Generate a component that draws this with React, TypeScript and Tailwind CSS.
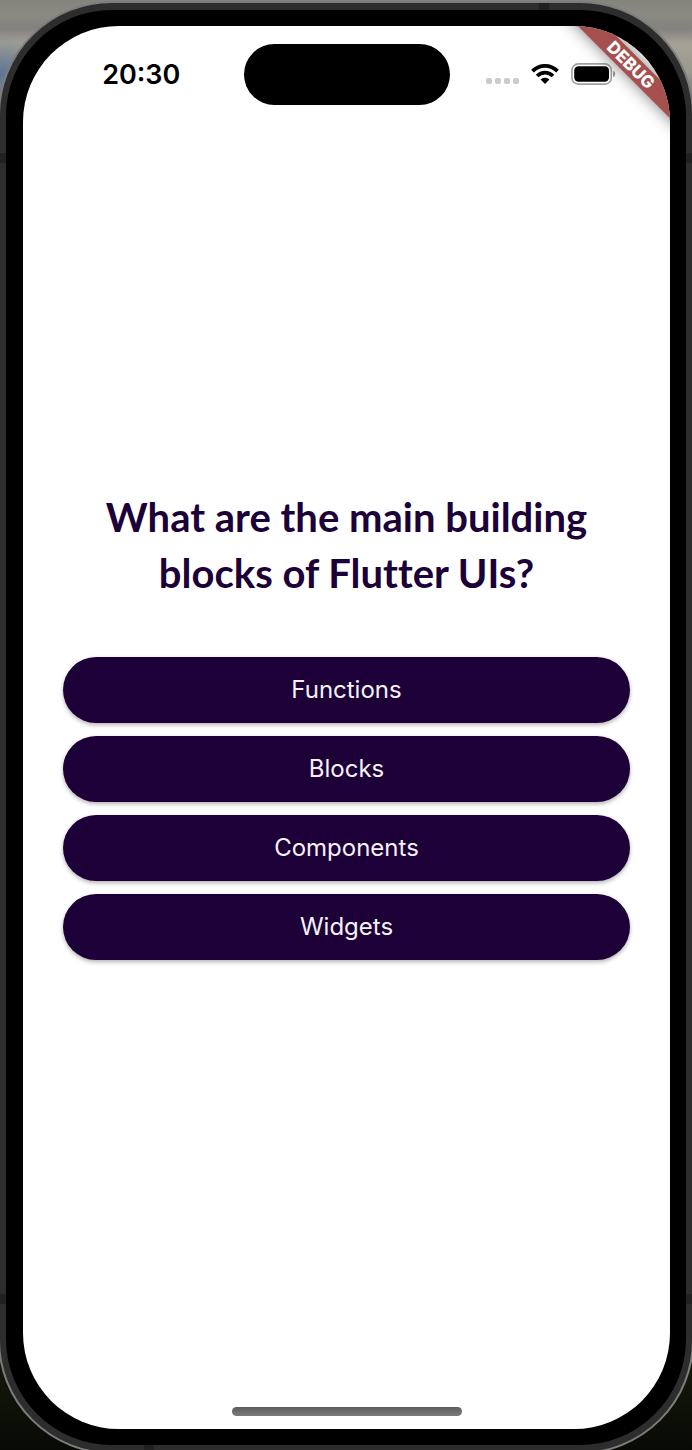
import React from "react";

const answers = ["Functions", "Blocks", "Components", "Widgets"];

function WifiIcon() {
  return (
    <svg viewBox="0 0 28 20" className="h-5 w-7" aria-hidden="true">
      <g fill="none" stroke="#000" strokeWidth="3.8">
        <path d="M1.5 7.2C8.5 0.2 19.5 0.2 26.5 7.2" />
        <path d="M6.1 12C10.6 7.6 17.4 7.6 21.9 12" />
      </g>
      <path d="M14 19.9L9.6 15.6C12.2 13 15.8 13 18.4 15.6Z" fill="#000" />
    </svg>
  );
}

function BatteryIcon() {
  return (
    <svg viewBox="0 0 46 22" className="h-[22px] w-[46px]" aria-hidden="true">
      <rect x="0.9" y="0.9" width="39.4" height="20.2" rx="6.4" fill="none" stroke="#a0a0a0" strokeWidth="1.6" />
      <rect x="3.2" y="3.2" width="34.8" height="15.6" rx="4.2" fill="#000" />
      <path d="M42.2 7.8C44.8 8.8 44.8 13.2 42.2 14.2Z" fill="#8f8f8f" />
    </svg>
  );
}

function StatusBar() {
  return (
    <header className="flex items-center pt-[18px]">
      <div className="flex h-[61px] flex-1 items-center justify-center pl-4">
        <time className="text-[27px] leading-8 font-semibold text-black">20:30</time>
      </div>
      <div className="h-[61px] w-[206px] rounded-full bg-black" />
      <div className="flex h-[61px] flex-1 items-center justify-center gap-3 pr-4 pb-0.5">
        <div className="flex gap-[3px] pt-3.5">
          <span className="size-1.5 rounded-xs bg-[#cbcbcb]" />
          <span className="size-1.5 rounded-xs bg-[#cbcbcb]" />
          <span className="size-1.5 rounded-xs bg-[#cbcbcb]" />
          <span className="size-1.5 rounded-xs bg-[#cbcbcb]" />
        </div>
        <WifiIcon />
        <BatteryIcon />
      </div>
    </header>
  );
}

function DebugBanner() {
  return (
    <div className="absolute -top-[61px] -right-[61px] flex size-[200px] rotate-45 items-center justify-center">
      <span className="flex h-5 w-full items-center justify-center bg-[#a54f4e] text-[17px] leading-5 font-extrabold text-white shadow-[0_0_16px_rgba(0,0,0,0.5)]">
        DEBUG
      </span>
    </div>
  );
}

export default function App() {
  return (
    <div className="flex h-screen min-h-[1000px] overflow-hidden bg-[radial-gradient(60px_38px_at_0px_74px,#5f7596,transparent),linear-gradient(180deg,#85847c_0%,#8b8a82_1%,#83827f_2%,#a5a196_3%,#9a9a90_5%,#6a6d70_7%,#23262b_12%,#1d1d1d_80%,#12160a_95%,#080a04_100%)] pt-px font-[Inter,'Liberation_Sans',sans-serif]">
      <div className="relative -mx-0.5 -mb-1 flex flex-1 rounded-[114px] border-2 border-[#7d7d7d] bg-[#2d2d2d] px-1.5 py-[7px]">
        <div className="absolute inset-x-0 top-[150px] h-2.5 bg-[#212121]" />
        <div className="absolute inset-x-0 bottom-[148px] h-2.5 bg-[#212121]" />
        <div className="absolute top-0 right-[143px] h-2.5 w-2.5 bg-[#212121]" />
        <div className="absolute bottom-0 left-36 h-2.5 w-2.5 bg-[#212121]" />
        <div className="relative flex flex-1 rounded-[106px] bg-black py-4 pr-4 pl-[17px]">
          <div className="relative flex flex-1 flex-col overflow-hidden rounded-[96px] bg-white">
            <StatusBar />
            <main className="flex flex-1 flex-col justify-center gap-[13px] px-10 pb-1.5">
              <h1 className="mb-[43px] px-4 text-center font-[Lato,sans-serif] text-[40px] leading-[56px] font-bold text-[#1c0138] [font-variant-ligatures:none]">
                What are the main building blocks of Flutter UIs?
              </h1>
              {answers.map((answer) => (
                <button
                  key={answer}
                  type="button"
                  className="h-[66px] rounded-full bg-[#1d0037] text-[24px] leading-8 text-[#f4f2f6] shadow-[0_2px_4px_rgba(0,0,0,0.3)]"
                >
                  {answer}
                </button>
              ))}
            </main>
            <footer className="flex h-[79px] items-end justify-center pb-[13px]">
              <div className="h-[9px] w-[230px] rounded-full bg-linear-to-b from-[#5c5c5c] to-[#7c7c7c]" />
            </footer>
            <DebugBanner />
          </div>
        </div>
      </div>
    </div>
  );
}
